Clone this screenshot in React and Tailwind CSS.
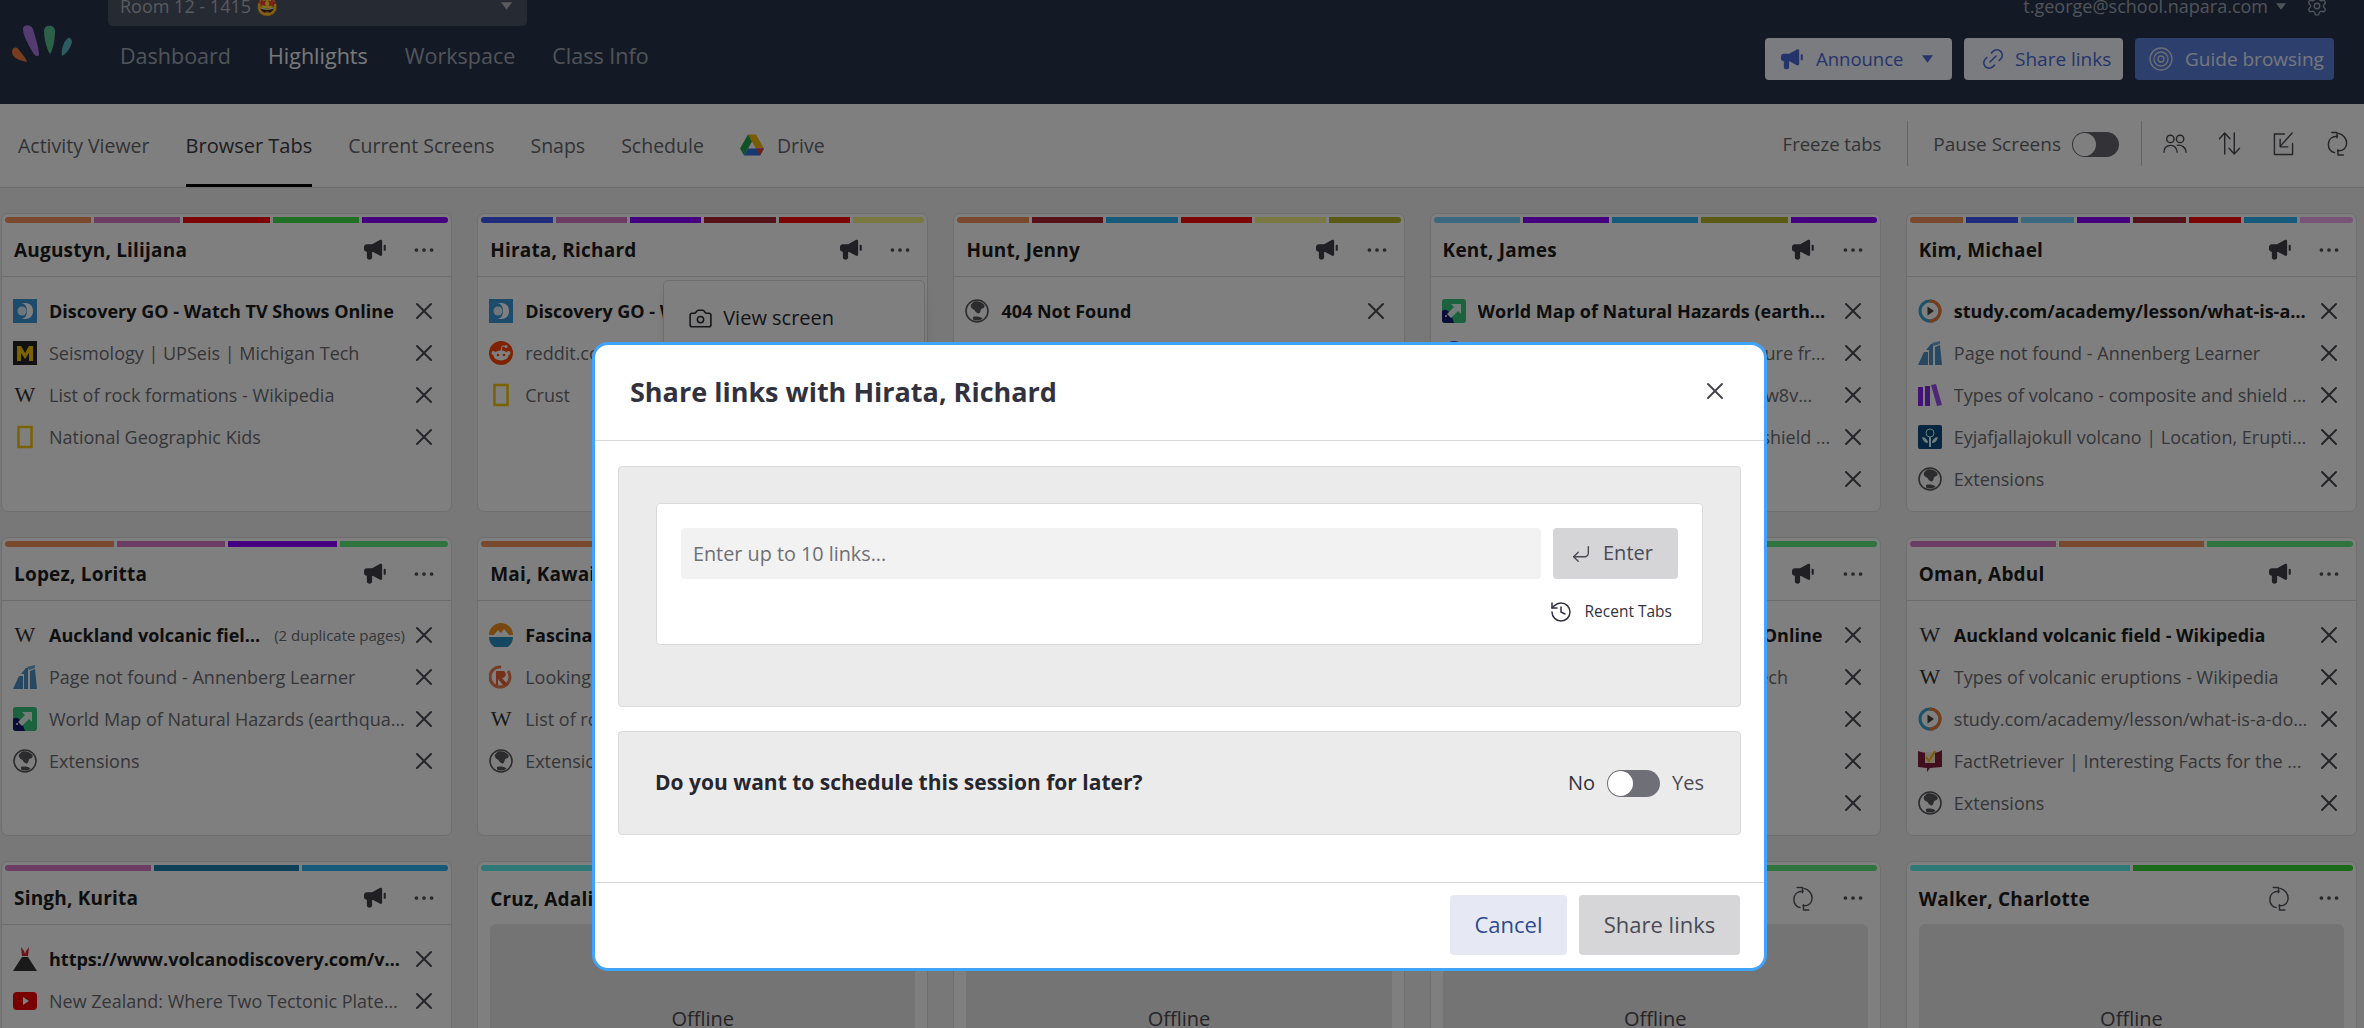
import React from 'react';
import { X, Ellipsis, History, CornerDownLeft, Camera, Settings, Link2 } from 'lucide-react';

const Megaphone = ({ className = 'w-[23px] h-[21px] text-[#3f3f48]' }) => (
  <svg viewBox="0 0 24 22" className={className} fill="currentColor">
    <path d="M1 8.5C1 6.6 2.2 5.5 4 5.5H9.5L17.5 1C18.8.3 20 .9 20 2.2V16.2C20 17.5 18.8 18.1 17.5 17.4L10.5 13.6H9.5V19.5C9.5 22.4 4 22.4 4 19.5V13.4C2.2 13.1 1 12 1 10.4Z" />
    <rect x="21.6" y="6" width="2.2" height="6.4" rx="1" />
  </svg>
);
const Refresh = ({ className = 'w-[22px] h-[25px] text-[#55555c]' }) => (
  <svg viewBox="0 0 22 26" className={className} fill="none" stroke="currentColor" strokeWidth="1.5" strokeLinecap="round" strokeLinejoin="round">
    <path d="M11 5.5C5 5.5 1.5 9 1.5 14C1.5 18 4 21.5 8 22.5" />
    <path d="M5 1.5H10.5V7" />
    <path d="M12 2.5C17 3.5 20.5 8 20.5 12.5C20.5 17 17.5 21 11 20.5" />
    <path d="M17 25H11.5V19.5" />
  </svg>
);
const People = () => (
  <svg viewBox="0 0 26 24" className="w-[25px] h-[23px] text-[#4a4a52]" fill="none" stroke="currentColor" strokeWidth="1.5">
    <circle cx="8" cy="7" r="4" /><circle cx="18.5" cy="7" r="4" />
    <path d="M1 22C1 17 4 14 8.5 14C13 14 15 17.5 15.500 22" />
    <path d="M15 14C20 13 25 16 25 22" />
  </svg>
);
const Sort = () => (
  <svg viewBox="0 0 24 26" className="w-[23px] h-[25px] text-[#4a4a52]" fill="none" stroke="currentColor" strokeWidth="1.5" strokeLinecap="round" strokeLinejoin="round">
    <path d="M7 24V2M1.500 8L7 2L12.500 8" /><path d="M17 2V24M11.500 18L17 24L22.500 18" />
  </svg>
);
const ExportIcon = () => (
  <svg viewBox="0 0 22 26" className="w-[21px] h-[25px] text-[#4a4a52]" fill="none" stroke="currentColor" strokeWidth="1.5" strokeLinecap="round" strokeLinejoin="round">
    <path d="M12 3H1.500V24.500H20.500V13" /><path d="M20 2L7.500 16M7.500 8.500V16.500H15.500" />
  </svg>
);
const Target = () => (
  <svg viewBox="0 0 24 24" className="w-[24px] h-[24px] text-[#d8deea]" fill="none" stroke="currentColor" strokeWidth="1.300">
    <circle cx="12" cy="12" r="11" /><circle cx="12" cy="12" r="7" /><circle cx="12" cy="12" r="3" />
  </svg>
);
const Drive = () => (
  <svg viewBox="0 0 24 22" className="w-[24px] h-[23px]">
    <path d="M8 0H16L24 14H16Z" fill="#f5b800" />
    <path d="M8 0L0 14L4 21L12 7Z" fill="#22a34a" />
    <path d="M4 21H20L24 14H8Z" fill="#2f6fe0" />
    <path d="M20 21L24 14H16Z" fill="#e0402f" />
  </svg>
);
const Logo = () => (
  <svg viewBox="0 0 60 38" className="w-[60px] h-[38px]">
    <path d="M0 27C0 22 5 21 7 25C10 29 14 33 15 37C9 36 0 33 0 27Z" fill="#f07a3e" />
    <path d="M11 4C11-1 19-1 21 4C23 12 27 22 27 30C25 33 22 30 20 26C16 19 11 10 11 4Z" fill="#a878e0" />
    <path d="M32 6C32-1 43-1 43 6C43 14 41 25 38 29C35 25 32 14 32 6Z" fill="#58c090" />
    <path d="M54 15C57 11 60 14 60 17C59 23 54 29 50 31C49 25 51 19 54 15Z" fill="#5ab8c0" />
  </svg>
);

const Globe = ({ c = '#58585c' }) => (
  <svg viewBox="0 0 24 24" className="w-6 h-6">
    <circle cx="12" cy="12" r="11" fill="none" stroke={c} strokeWidth="1.600" />
    <path d="M9 2.500C13 1.500 17 3 19.500 6C20 8.500 18.500 9.500 17 9.500C15 11 16 13.500 14 14.500C12 14.500 10.500 13 9.500 11C7 10 5 8 6 5.500ZM8 18C11 17 15 17.500 17.500 19.500C15 22 10.500 22 8 20.500Z" fill={c} />
  </svg>
);
const FAV = {
  disc: () => (
    <svg viewBox="0 0 24 24" className="w-6 h-6"><rect width="24" height="24" fill="#3a96d6" /><path d="M8 4H12C18 4 20 8 20 12C20 16 18 20 12 20H8C12 20 14 16 14 12C14 8 12 4 8 4Z" fill="#fff" /><circle cx="9" cy="12" r="4.500" fill="#dfeef8" /></svg>
  ),
  mtech: () => (
    <svg viewBox="0 0 24 24" className="w-6 h-6"><rect width="24" height="24" fill="#222" /><path d="M4 20V5H8L12 12L16 5H20V20H16V12L12 18L8 12V20Z" fill="#f5c400" /></svg>
  ),
  wiki: () => <span className="w-6 text-center font-['Liberation_Serif',serif] text-[22px] leading-6 text-[#333]">W</span>,
  natgeo: () => (
    <svg viewBox="0 0 24 24" className="w-6 h-6"><rect x="5.500" y="2" width="13" height="20" fill="none" stroke="#f5c400" strokeWidth="2.500" /></svg>
  ),
  reddit: () => (
    <svg viewBox="0 0 24 24" className="w-6 h-6"><circle cx="12" cy="12" r="12" fill="#ff4500" /><ellipse cx="12" cy="14.500" rx="7.500" ry="5" fill="#fff" /><circle cx="4.500" cy="12" r="2" fill="#fff" /><circle cx="19.500" cy="12" r="2" fill="#fff" /><circle cx="17" cy="5.500" r="1.500" fill="#fff" /><path d="M12 10L13 5L17 5.500" stroke="#fff" fill="none" /><circle cx="9" cy="14" r="1.300" fill="#ff4500" /><circle cx="15" cy="14" r="1.300" fill="#ff4500" /></svg>
  ),
  annen: () => (
    <svg viewBox="0 0 24 24" className="w-6 h-6"><path d="M0 24L6 11H10V24Z" fill="#4f90c0" /><path d="M8 9L13 3H15V24H11V9Z" fill="#4f90c0" /><path d="M14 2L22 0V3L16 5Z" fill="#70a8d0" /><path d="M17 6L22 4L24 24H17Z" fill="#4f90c0" /></svg>
  ),
  map: () => (
    <svg viewBox="0 0 24 24" className="w-6 h-6"><rect width="24" height="24" rx="3" fill="#36c47c" /><path d="M0 12C5 8 9 14 12 24H3C1 24 0 23 0 21Z" fill="#141a6e" /><path d="M9 5H19V15L16 12L9 19L5 15L12 8Z" fill="#eafaf0" /><circle cx="4" cy="17" r="1" fill="#fff" /></svg>
  ),
  globe: () => <Globe />,
  study: () => (
    <svg viewBox="0 0 24 24" className="w-6 h-6"><circle cx="12" cy="12" r="10" fill="none" stroke="#3aa4d0" strokeWidth="3" /><path d="M12 2A10 10 0 0 1 12 22" fill="none" stroke="#ee7a30" strokeWidth="3" /><path d="M9.500 7.500L16 12L9.500 16.500Z" fill="#444" /></svg>
  ),
  books: () => (
    <svg viewBox="0 0 24 24" className="w-6 h-6"><rect y="4" width="5" height="19" fill="#8a20f0" /><rect x="7" y="3" width="5" height="20" fill="#7a30d8" /><path d="M13 2L18 1L24 22L19 23Z" fill="#9a50e8" /></svg>
  ),
  brit: () => (
    <svg viewBox="0 0 24 24" className="w-6 h-6"><rect width="24" height="24" rx="2" fill="#0a4a80" /><circle cx="12" cy="8" r="4" fill="none" stroke="#cfe" strokeWidth="1" /><path d="M11 12H13V22H11ZM4 12C7 12 10 15 10 18C7 18 5 16 4 12ZM20 12C17 12 14 15 14 18C17 18 19 16 20 12Z" fill="#dff" /></svg>
  ),
  fact: () => (
    <svg viewBox="0 0 24 24" className="w-6 h-6"><path d="M0 2C5 4 8 4 12 3C16 4 20 4 24 1V18L12 19L9 23V19L0 18Z" fill="#80203c" /><rect x="7" y="3" width="10" height="11" fill="#f5e6d0" /><path d="M8 8L11 12L17 2" fill="none" stroke="#f5b800" strokeWidth="2" /></svg>
  ),
  fascin: () => (
    <svg viewBox="0 0 24 24" className="w-6 h-6"><path d="M0 12A12 12 0 0 1 24 12Z" fill="#f09020" /><path d="M0 14A12 12 0 0 0 24 14Z" fill="#2a90c0" /><path d="M4 13L9 7L12 10L15 6L21 13Z" fill="#fff" /></svg>
  ),
  rappler: () => (
    <svg viewBox="0 0 24 24" className="w-6 h-6"><circle cx="11" cy="12" r="10" fill="none" stroke="#e87a50" strokeWidth="3" strokeDasharray="48 8" /><path d="M7 6H15C18 8 17 13 13 13L19 20H14L9 14V20H7Z" fill="#e86030" /></svg>
  ),
  volcano: () => (
    <svg viewBox="0 0 24 24" className="w-6 h-6"><path d="M0 24L9 10H15L24 24Z" fill="#333" /><path d="M8 0L11 4L12 7L13 4L16 0L15 9H9Z" fill="#e02030" /></svg>
  ),
  yt: () => (
    <svg viewBox="0 0 24 24" className="w-6 h-6"><rect y="3" width="24" height="18" rx="4" fill="#f00000" /><path d="M10 8L16 12L10 16Z" fill="#fff" /></svg>
  ),
  bluec: () => <svg viewBox="0 0 24 24" className="w-6 h-6"><circle cx="12" cy="12" r="12" fill="#2040d0" /></svg>,
};

const S = {
  orange: 'bg-[#f0935a]', pink: 'bg-[#d878c8]', red: 'bg-[#f80808]', green: 'bg-[#3ede48]', purple: 'bg-[#8800ff]',
  navy: 'bg-[#3e58f8]', maroon: 'bg-[#aa2030]', yellow: 'bg-[#f0f080]', olive: 'bg-[#b4b428]', sky: 'bg-[#74d0f8]',
  teal: 'bg-[#2ab4f4]', lilac: 'bg-[#f0a8f0]', green2: 'bg-[#5ee87c]', aqua: 'bg-[#5ef0f0]', dgreen: 'bg-[#34d434]',
  deep: 'bg-[#1c80b0]',
};

const Stripes = ({ list }) => (
  <div className="flex gap-[3px] px-[3px] pt-[3px] h-[9px] shrink-0">
    {list.map((c, i) => (
      <div key={i} className={`flex-1 ${S[c]} ${i === 0 ? 'rounded-l-[4px]' : ''} ${i === list.length - 1 ? 'rounded-r-[4px]' : ''}`} />
    ))}
  </div>
);

const Row = ({ r }) => {
  const Icon = r.i ? FAV[r.i] : null;
  return (
    <div className="flex items-center h-[42px] pl-[11px]">
      <div className="w-6 h-6 shrink-0 flex items-center justify-center">{Icon && <Icon />}</div>
      <div className={`ml-[12px] w-[356px] shrink-0 min-w-0 flex items-center text-[18px] ${r.b ? 'font-bold text-[#1c1c1c]' : 'text-[#6c6c72]'}`}>
        <span className="truncate">{r.t}</span>
        {r.x && <span className="ml-auto pl-3 shrink-0 text-[15px] font-normal text-[#6c6c72]">{r.x}</span>}
      </div>
      <X className="ml-[5px] w-[28px] h-[28px] shrink-0 text-[#4a4a52]" strokeWidth={1.7} />
    </div>
  );
};

const Card = ({ name, stripes, rows, offline, menu }) => (
  <div className="relative flex flex-col border border-[#dcdcdc] rounded-[7px] bg-white overflow-visible">
    <Stripes list={stripes} />
    <div className={`flex items-center h-[54px] pl-[12px] shrink-0 ${offline ? '' : 'border-b border-[#d8d8d8]'}`}>
      <span className="mt-[2px] text-[19px] font-bold text-[#1c1c1c] tracking-[0.2px]">{name}</span>
      <div className="ml-auto w-[24px] flex justify-center">{offline ? <Refresh /> : <Megaphone />}</div>
      <div className="ml-[27px] mr-[16px] w-[22px] flex justify-center">
        <Ellipsis className="w-[26px] h-[26px] shrink-0 text-[#4a4a52]" strokeWidth={1.4} />
      </div>
    </div>
    {offline ? (
      <div className="mx-[12px] h-[190px] mt-[-1px] rounded-[6px] bg-[#e8e8e8] flex items-center justify-center text-[20px] text-[#4a4a52]">
        Offline
      </div>
    ) : (
      <div className="pt-[13px]">
        {rows.map((r, i) => <Row key={i} r={r} />)}
      </div>
    )}
    {menu && (
      <div className="absolute left-[185px] top-[66px] w-[262px] h-[200px] bg-white rounded-[5px] border border-[#dcdcdc] shadow-lg pl-[24px] pt-[22px]">
        <div className="flex items-center gap-[10px] text-[20px] text-[#2a2a30]">
          <Camera className="w-[25px] h-[25px]" strokeWidth={1.5} />
          <span>View screen</span>
        </div>
      </div>
    )}
  </div>
);

const ext = { i: 'globe', t: 'Extensions' };
const cards = [
  { name: 'Augustyn, Lilijana', stripes: ['orange', 'pink', 'red', 'green', 'purple'], rows: [
    { i: 'disc', t: 'Discovery GO - Watch TV Shows Online', b: 1 },
    { i: 'mtech', t: 'Seismology | UPSeis | Michigan Tech' },
    { i: 'wiki', t: 'List of rock formations - Wikipedia' },
    { i: 'natgeo', t: 'National Geographic Kids' },
  ] },
  { name: 'Hirata, Richard', menu: 1, stripes: ['navy', 'pink', 'purple', 'maroon', 'red', 'yellow'], rows: [
    { i: 'disc', t: 'Discovery GO - Watch TV Shows Online', b: 1 },
    { i: 'reddit', t: 'reddit.com: the front page of the internet' },
    { i: 'natgeo', t: 'Crust' },
  ] },
  { name: 'Hunt, Jenny', stripes: ['orange', 'maroon', 'teal', 'red', 'yellow', 'olive'], rows: [
    { i: 'globe', t: '404 Not Found', b: 1 },
  ] },
  { name: 'Kent, James', stripes: ['sky', 'purple', 'teal', 'olive', 'purple'], rows: [
    { i: 'map', t: 'World Map of Natural Hazards (earthquakes, volcanoes)', b: 1 },
    { i: 'bluec', t: 'Plate tectonics and an earth structure fr...' },
    { i: 'yt', t: 'https://en.youtube.com/watch?v=fw8v...' },
    { i: 'books', t: 'Types of volcano - composite and shield ...' },
    { t: '' },
  ] },
  { name: 'Kim, Michael', stripes: ['orange', 'navy', 'sky', 'purple', 'maroon', 'red', 'teal', 'lilac'], rows: [
    { i: 'study', t: 'study.com/academy/lesson/what-is-a-dormant-volcano', b: 1 },
    { i: 'annen', t: 'Page not found - Annenberg Learner' },
    { i: 'books', t: 'Types of volcano - composite and shield ...' },
    { i: 'brit', t: 'Eyjafjallajokull volcano | Location, Eruption, Facts' },
    ext,
  ] },
  { name: 'Lopez, Loritta', stripes: ['orange', 'pink', 'purple', 'green2'], rows: [
    { i: 'wiki', t: 'Auckland volcanic field - Wikipedia', b: 1, x: '(2 duplicate pages)' },
    { i: 'annen', t: 'Page not found - Annenberg Learner' },
    { i: 'map', t: 'World Map of Natural Hazards (earthquakes, volcanoes)' },
    ext,
  ] },
  { name: 'Mai, Kawai', stripes: ['orange', 'pink', 'purple'], rows: [
    { i: 'fascin', t: 'Fascinating Facts about Volcanoes', b: 1 },
    { i: 'rappler', t: 'Looking at the volcano' },
    { i: 'wiki', t: 'List of rock formations - Wikipedia' },
    ext,
  ] },
  { name: 'Novak, Jan', stripes: ['orange', 'pink'], rows: [] },
  { name: 'Nguyen, Anna', stripes: ['orange', 'green2'], rows: [
    { i: 'disc', t: 'Discovery GO - Watch TV Shows Online', b: 1 },
    { i: 'mtech', t: 'Seismology | UPSeis | Michigan Tech' },
    { t: '' }, { t: '' }, { t: '' },
  ] },
  { name: 'Oman, Abdul', stripes: ['pink', 'orange', 'green2'], rows: [
    { i: 'wiki', t: 'Auckland volcanic field - Wikipedia', b: 1 },
    { i: 'wiki', t: 'Types of volcanic eruptions - Wikipedia' },
    { i: 'study', t: 'study.com/academy/lesson/what-is-a-dormant-volcano' },
    { i: 'fact', t: 'FactRetriever | Interesting Facts for the ...' },
    ext,
  ] },
  { name: 'Singh, Kurita', stripes: ['pink', 'deep', 'teal'], rows: [
    { i: 'volcano', t: 'https://www.volcanodiscovery.com/volcanoes/new-zealand', b: 1 },
    { i: 'yt', t: 'New Zealand: Where Two Tectonic Plates Meet and Collide' },
  ] },
  { name: 'Cruz, Adalia', offline: 1, stripes: ['aqua', 'green'] },
  { name: 'Park, Min', offline: 1, stripes: ['orange', 'pink'] },
  { name: 'Tan, Wei', offline: 1, stripes: ['aqua', 'green2'] },
  { name: 'Walker, Charlotte', offline: 1, stripes: ['aqua', 'dgreen'] },
];

export default function App() {
  return (
    <div className="relative w-full h-[1028px] overflow-hidden bg-[#f0f0f0] font-['Open_Sans',sans-serif]">
      {/* top bar */}
      <header className="flex h-[104px] bg-[#28344a] overflow-hidden">
        <div className="w-[96px] shrink-0 pl-[12px] pt-[25px]"><Logo /></div>
        <div className="flex flex-col">
          <div className="-mt-[14px] ml-[12px] w-[419px] h-[40px] shrink-0 rounded-[5px] bg-[#4c5466] flex items-center pl-[12px] pr-[15px] text-[18px] text-[#b0b4bc]">
            <span>Room 12 - 1415 🤩</span>
            <svg viewBox="0 0 12 8" className="ml-auto w-[11px] h-[8px]" fill="#b0b4bc"><path d="M0 0H12L6 8Z" /></svg>
          </div>
          <nav className="flex gap-[37px] mt-[16px] ml-[24px] text-[21.5px] leading-[27px] text-[#a0a8b4]">
            <span>Dashboard</span>
            <span className="font-medium text-[#eef0f4]">Highlights</span>
            <span>Workspace</span>
            <span>Class Info</span>
          </nav>
        </div>
        <div className="ml-auto pr-[30px] flex flex-col items-end">
          <div className="-mt-[14px] h-[40px] shrink-0 flex items-center pr-[6px] text-[18px] text-[#a0a8b4]">
            <span>t.george@school.napara.com</span>
            <svg viewBox="0 0 12 8" className="ml-[8px] w-[10px] h-[7px]" fill="#a0a8b4"><path d="M0 0H12L6 8Z" /></svg>
            <Settings className="ml-[20px] w-[22px] h-[22px]" strokeWidth={1.5} />
          </div>
          <div className="flex gap-[12px] mt-[12px] text-[19px]">
            <button className="w-[187px] h-[42px] rounded-[4px] bg-[#f6f8ff] text-[#4a6ad8] flex items-center pl-[15px] text-[18.5px] font-medium">
              <Megaphone className="w-[23px] h-[22px]" />
              <span className="ml-[13px]">Announce</span>
              <svg viewBox="0 0 12 8" className="ml-[19px] w-[11px] h-[8px]" fill="currentColor"><path d="M0 0H12L6 8Z" /></svg>
            </button>
            <button className="w-[159px] h-[42px] rounded-[4px] bg-[#f6f8ff] text-[#4a6ad8] flex items-center pl-[16px]">
              <Link2 className="w-[26px] h-[26px] -rotate-45" strokeWidth={1.4} />
              <span className="ml-[9px]">Share links</span>
            </button>
            <button className="w-[199px] h-[42px] rounded-[4px] bg-[#587eda] text-[#e8eefc] flex items-center pl-[14px]">
              <Target />
              <span className="ml-[12px]">Guide browsing</span>
            </button>
          </div>
        </div>
      </header>

      {/* tabs bar */}
      <div className="flex h-[84px] bg-white border-b border-[#d8d8d8] pl-[18px] text-[19.5px] text-[#66666c]">
        <div className="flex gap-[36px]">
          <div className="flex items-center h-full">Activity Viewer</div>
          <div className="flex items-center h-full border-b-[3px] border-black text-[#3c3c42] text-[20px] pt-[3px] font-medium">Browser Tabs</div>
          <div className="flex items-center h-full">Current Screens</div>
          <div className="flex items-center h-full">Snaps</div>
          <div className="flex items-center h-full">Schedule</div>
          <div className="flex items-center h-full gap-[13px]"><Drive />Drive</div>
        </div>
        <div className="ml-auto flex items-center pr-[15px]">
          <span className="text-[18.5px] mr-[26px] -mt-[3px]">Freeze tabs</span>
          <div className="w-px h-[45px] bg-[#c8c8c8] -mt-[5px]" />
          <span className="ml-[25px] text-[19px] -mt-[2px]">Pause Screens</span>
          <div className="ml-[11px] w-[47px] h-[25px] rounded-full bg-[#66666e] p-px flex items-center -mt-[2px]"><div className="w-[23px] h-[23px] rounded-full bg-white" /></div>
          <div className="ml-[22px] w-px h-[45px] bg-[#c8c8c8] -mt-[5px]" />
          <div className="flex ml-[21px] gap-[30px] -mt-[5px] items-center">
            <div className="w-6 flex justify-center"><People /></div>
            <div className="w-6 flex justify-center"><Sort /></div>
            <div className="w-6 flex justify-center"><ExportIcon /></div>
            <div className="w-6 flex justify-center"><Refresh className="w-[23px] h-[25px] text-[#4a4a52]" /></div>
          </div>
        </div>
      </div>

      {/* grid of students */}
      <main className="grid grid-cols-5 auto-rows-[299px] gap-x-[25px] gap-y-[25px] pl-[1px] pr-[7px] pt-[25px] bg-[#f0f0f0]">
        {cards.map((c) => <Card key={c.name} {...c} />)}
      </main>

      {/* overlay */}
      <div className="absolute inset-0 bg-black/50" />

      {/* modal */}
      <div className="absolute left-[592px] top-[342px] w-[1175px] h-[629px] bg-white border-[3px] border-[#3fa4ff] rounded-[16px] flex flex-col text-[#32323f]">
        <div className="flex items-center h-[96px] pl-[35px] pr-[35px] border-b border-[#d8d8d8] shrink-0">
          <h2 className="text-[27px] font-bold -mt-[1px]">Share links with Hirata, Richard</h2>
          <X className="ml-auto w-[28px] h-[28px] -mt-[3px] text-[#44444c]" strokeWidth={1.7} />
        </div>
        <div className="mx-[23px] mt-[25px] h-[241px] shrink-0 bg-[#ebebeb] border border-[#dadada] rounded-[4px] pt-[36px] px-[37px]">
          <div className="h-[142px] bg-white border border-[#dadada] rounded-[4px] pt-[24px] px-[24px]">
            <div className="flex gap-[12px]">
              <input readOnly placeholder="Enter up to 10 links..." className="flex-1 h-[51px] rounded-[4px] bg-[#f2f2f2] px-[12px] text-[19.8px] text-[#6f6f76] placeholder-[#6f6f76] outline-none" />
              <button className="w-[125px] h-[51px] rounded-[4px] bg-[#d5d5d8] text-[#4a4a55] flex items-center pl-[17px] text-[20px] font-medium">
                <CornerDownLeft className="w-[22px] h-[22px]" strokeWidth={1.5} />
                <span className="ml-[11px] -mt-[2px]">Enter</span>
              </button>
            </div>
            <div className="flex items-center justify-end mt-[21px] pr-[6px] text-[15.5px] font-medium">
              <History className="w-[24px] h-[24px]" strokeWidth={1.5} />
              <span className="ml-[12px]">Recent Tabs</span>
            </div>
          </div>
        </div>
        <div className="mx-[23px] mt-[24px] h-[104px] shrink-0 bg-[#ebebeb] border border-[#dadada] rounded-[4px] flex items-center px-[36px]">
          <span className="text-[21px] font-bold text-[#26262e]">Do you want to schedule this session for later?</span>
          <span className="ml-auto text-[20px] font-medium">No</span>
          <div className="ml-[12px] w-[53px] h-[27px] rounded-full bg-[#6f6f78] p-px flex items-center"><div className="w-[25px] h-[25px] rounded-full bg-white" /></div>
          <span className="ml-[12px] text-[20px] text-[#4a4a55]">Yes</span>
        </div>
        <div className="mt-[47px] flex-1 border-t border-[#d8d8d8] pt-[12px] pr-[24px] flex justify-end gap-[12px] text-[22px] font-medium">
          <button className="w-[117px] h-[60px] pb-[2px] rounded-[4px] bg-[#e6e9f4] text-[#2f4a8f]">Cancel</button>
          <button className="w-[161px] h-[60px] pb-[2px] rounded-[4px] bg-[#d6d6d8] text-[#4a4a55]">Share links</button>
        </div>
      </div>
    </div>
  );
}
